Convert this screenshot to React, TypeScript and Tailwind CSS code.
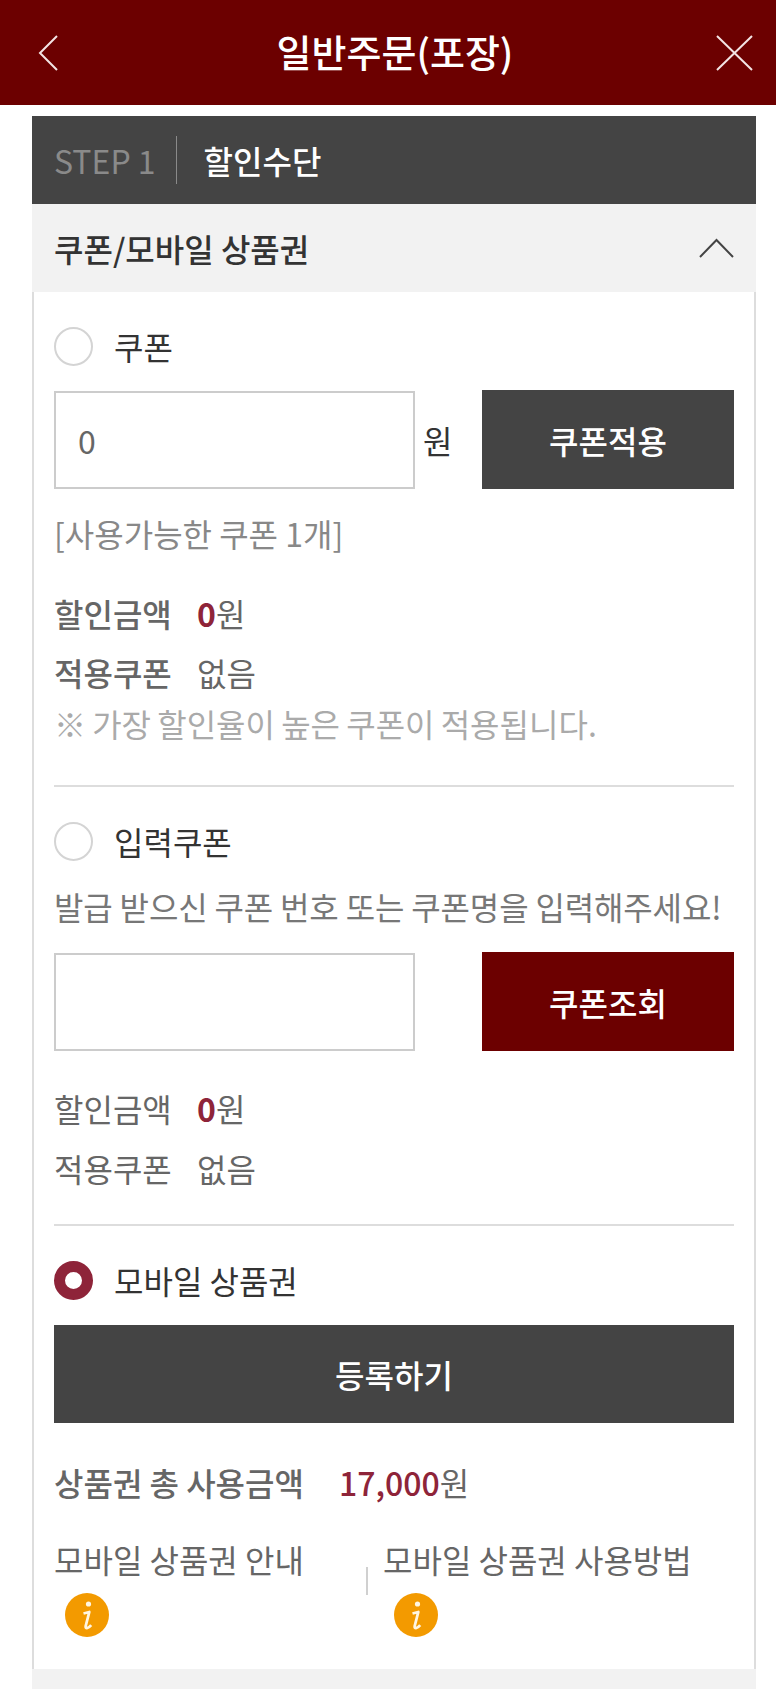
const FONT = "font-['Noto_Sans_CJK_KR','Noto_Sans',sans-serif]";

function Radio({ checked }: { checked?: boolean }) {
  return checked ? (
    <span className="h-[39px] w-[39px] shrink-0 rounded-full border-[11px] border-[#8e2439] bg-white" />
  ) : (
    <span className="h-[39px] w-[39px] shrink-0 rounded-full border-2 border-[#d4d4d4] bg-white" />
  );
}

function RadioRow({ label, checked, className }: { label: string; checked?: boolean; className: string }) {
  return (
    <div className={`flex h-[39px] items-center gap-[21px] ${className}`}>
      <Radio checked={checked} />
      <span className="-mt-[1px] text-[32px] leading-none text-[#333333]">{label}</span>
    </div>
  );
}

function InfoIcon({ className }: { className?: string }) {
  return (
    <svg viewBox="0 0 44 44" className={`block h-[44px] w-[44px] ${className ?? ""}`}>
      <circle cx="22" cy="22" r="22" fill="#f39a00" />
      <circle cx="23.5" cy="11" r="2.6" fill="#fff6e2" />
      <path
        d="M18.5 20.5 L24.3 19 L20.7 33 C20.2 36 23 36 26.2 32.2"
        fill="none"
        stroke="#fff6e2"
        strokeWidth="2.8"
        strokeLinejoin="round"
      />
    </svg>
  );
}

function Line({ label, className, bold, children }: { label: string; className: string; bold?: boolean; children: React.ReactNode }) {
  return (
    <div className={`flex h-[40px] items-center text-[32px] leading-none text-[#666666] ${className}`}>
      <span className={`w-[143px] ${bold ? "font-medium" : ""}`}>{label}</span>
      {children}
    </div>
  );
}

export default function App() {
  return (
    <div className={`h-[1689px] w-[776px] overflow-hidden bg-white ${FONT}`}>
      <header className="flex h-[105px] items-center bg-[#6c0000] pl-[38px] pr-[23px]">
        <svg viewBox="0 0 20 36" className="h-[36px] w-[20px]" fill="none" stroke="#f3e4e4" strokeWidth="2">
          <path d="M19 1 L2 18 L19 35" />
        </svg>
        <h1 className="-mt-[4px] flex-1 pl-[16px] text-center text-[38px] font-medium leading-none text-white">일반주문(포장)</h1>
        <svg viewBox="0 0 37 36" className="h-[36px] w-[37px]" fill="none" stroke="#f3e4e4" strokeWidth="2">
          <path d="M1 1 L36 35 M36 1 L1 35" />
        </svg>
      </header>

      <main className="ml-[32px] mt-[11px] w-[724px]">
        <div className="flex h-[88px] items-center bg-[#444444] pl-[22px]">
          <span className="-mt-[1px] text-[32px] leading-none text-[#8a8a8a]">STEP 1</span>
          <span className="ml-[20px] h-[48px] w-[1px] bg-[#8a8a8a]" />
          <span className="-mt-[1px] ml-[27px] text-[32px] font-medium leading-none text-white">할인수단</span>
        </div>

        <div className="flex h-[88px] items-center justify-between bg-[#f2f2f2] pl-[22px] pr-[22px]">
          <span className="-mt-[1px] text-[32px] font-medium leading-none text-[#333333]">쿠폰/모바일 상품권</span>
          <svg viewBox="0 0 35 20" className="h-[20px] w-[35px]" fill="none" stroke="#444444" strokeWidth="2">
            <path d="M1 19 L17.5 2 L34 19" />
          </svg>
        </div>

        <section className="border-x-2 border-[#dddddd] px-[20px] pb-[32px] pt-[35px]">
          <RadioRow label="쿠폰" className="" />

          <div className="mt-[24px] flex h-[99px] items-center">
            <div className="flex h-[98px] w-[361px] items-center border-2 border-[#cccccc] pl-[22px] text-[32px] leading-none text-[#666666]">0</div>
            <span className="ml-[8px] text-[32px] leading-none text-[#333333]">원</span>
            <button className="ml-auto h-[99px] w-[252px] bg-[#444444] text-[32px] font-medium leading-none text-white">쿠폰적용</button>
          </div>

          <p className="mt-[24px] flex h-[40px] items-center text-[32px] leading-none text-[#888888]">[사용가능한 쿠폰 1개]</p>

          <Line label="할인금액" className="mt-[40px]" bold>
            <span>
              <b className="font-bold text-[#8e2439]">0</b>원
            </span>
          </Line>
          <Line label="적용쿠폰" className="mt-[19px]" bold>
            <span>없음</span>
          </Line>
          <p className="mt-[11px] h-[40px] whitespace-nowrap text-[32px] leading-[40px] [word-spacing:-1px] text-[#aaaaaa]">※ 가장 할인율이 높은 쿠폰이 적용됩니다.</p>

          <hr className="mt-[42px] h-[2px] border-0 bg-[#dddddd]" />

          <RadioRow label="입력쿠폰" className="mt-[35px]" />
          <p className="mt-[25px] flex h-[40px] items-center whitespace-nowrap text-[32px] leading-none tracking-[-0.15px] text-[#777777]">발급 받으신 쿠폰 번호 또는 쿠폰명을 입력해주세요!</p>

          <div className="mt-[26px] flex h-[99px] items-center">
            <div className="h-[98px] w-[361px] border-2 border-[#cccccc]" />
            <button className="ml-auto h-[99px] w-[252px] bg-[#6c0000] text-[32px] font-medium leading-none text-white">쿠폰조회</button>
          </div>

          <Line label="할인금액" className="mt-[37px]">
            <span>
              <b className="font-bold text-[#8e2439]">0</b>원
            </span>
          </Line>
          <Line label="적용쿠폰" className="mt-[20px]">
            <span>없음</span>
          </Line>

          <hr className="mt-[36px] h-[2px] border-0 bg-[#dddddd]" />

          <RadioRow label="모바일 상품권" checked className="mt-[35px]" />
          <button className="mt-[25px] h-[98px] w-full bg-[#444444] text-[32px] font-medium leading-none text-white">등록하기</button>

          <div className="mt-[39px] flex h-[40px] items-center text-[32px] leading-none text-[#666666]">
            <span className="w-[285px] font-medium">상품권 총 사용금액</span>
            <span>
              <span className="font-medium text-[#8e2439]">17,000</span>원
            </span>
          </div>

          <div className="mt-[37px] flex">
            <div className="w-[312px]">
              <div className="flex h-[40px] items-center whitespace-nowrap text-[32px] leading-none text-[#666666]">모바일 상품권 안내</div>
              <InfoIcon className="ml-[11px] mt-[14px]" />
            </div>
            <span className="mt-[28px] h-[28px] w-[2px] bg-[#d0d0d0]" />
            <div className="pl-[15px]">
              <div className="flex h-[40px] items-center whitespace-nowrap text-[32px] leading-none text-[#666666]">모바일 상품권 사용방법</div>
              <InfoIcon className="ml-[11px] mt-[14px]" />
            </div>
          </div>
        </section>

        <div className="h-[20px] bg-[#f2f2f2]" />
      </main>
    </div>
  );
}
